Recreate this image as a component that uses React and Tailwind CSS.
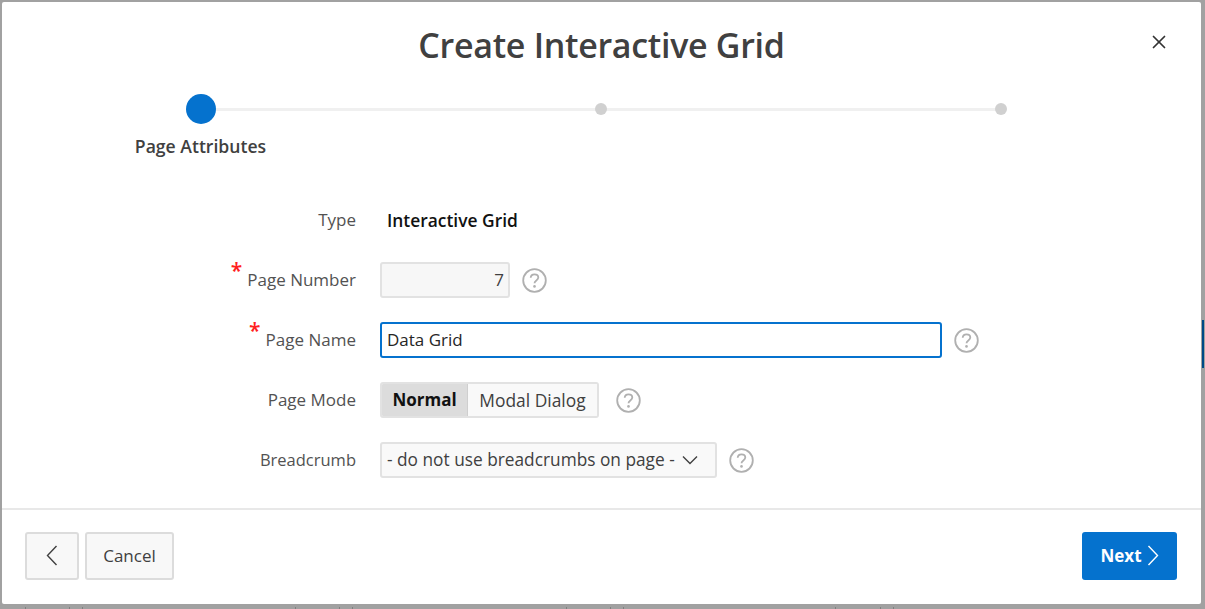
import { X } from "lucide-react";

const backdropTicks = [25, 69, 82, 295, 339, 352, 566, 610, 623, 835, 880, 893];

function Help() {
  return (
    <svg width="25" height="25" viewBox="0 0 25 25" fill="none" className="shrink-0">
      <circle cx="12.5" cy="12.5" r="11.3" stroke="#b0b0b0" strokeWidth="1.8" />
      <path d="M8.7 9.8c.1-2.2 1.7-3.4 3.8-3.4 2.2 0 3.8 1.3 3.8 3.2 0 2.9-3.8 2.9-3.8 5.7" stroke="#b0b0b0" strokeWidth="1.8" />
      <circle cx="12.5" cy="18.4" r="1.3" fill="#b0b0b0" />
    </svg>
  );
}

function Chevron({ dir, color }) {
  return (
    <svg width="12" height="21" viewBox="0 0 12 21" fill="none" className="shrink-0">
      <path d={dir === "left" ? "M10.5 1 1.5 10.5l9 9.5" : "M1.5 1l9 9.5-9 9.5"} stroke={color} strokeWidth="1.4" />
    </svg>
  );
}

function Row({ label, required, labelClass, children }) {
  return (
    <div className="flex h-[60px] items-center">
      <div className={`flex w-[354px] justify-end text-[#525252] ${labelClass || ""}`}>
        {required && <span className="mr-[5px] -mt-[9px] text-[21px] font-semibold leading-[24px] text-[#ff2020]">*</span>}
        <span>{label}</span>
      </div>
      <div className="ml-6 flex items-center">{children}</div>
    </div>
  );
}

export default function App() {
  return (
    <div className="relative flex h-[609px] w-[1205px] overflow-hidden bg-[#a1a1a1] pl-[2px] pt-[2px] font-['Open_Sans','Noto_Sans',sans-serif] text-[17px] text-[#404040]">
      {backdropTicks.map((x) => (
        <div key={x} className="absolute bottom-0 h-[2px] w-[1px] bg-[#808080]" style={{ left: x }} />
      ))}
      <div className="flex h-[602px] w-[1199px] shrink-0 flex-col rounded-[2px] bg-white">
        <div className="relative flex h-[86px] shrink-0 justify-center pt-[20px]">
          <h1 className="text-[34px] font-semibold leading-[46px] tracking-[-0.3px] text-[#404040]">Create Interactive Grid</h1>
          <X className="absolute right-[31px] top-[29px]" size={22} strokeWidth={1.9} color="#333" />
        </div>

        <div className="relative mx-auto mt-[6px] h-[78px] w-[800px] shrink-0 -translate-x-[1px]">
          <div className="absolute left-0 right-0 top-[14px] h-[3px] bg-[#f0f0f0]" />
          <div className="absolute -left-[15px] top-0 size-[30px] rounded-full bg-[#0572ce]" />
          <div className="absolute left-[394px] top-[9px] size-[12px] rounded-full bg-[#d0d0d0]" />
          <div className="absolute left-[794px] top-[9px] size-[12px] rounded-full bg-[#d0d0d0]" />
          <div className="absolute -left-[100px] top-[40px] w-[200px] text-center text-[17.6px] font-semibold leading-[24px]">Page Attributes</div>
        </div>

        <div className="mt-[18px] flex-1">
          <Row label="Type">
            <span className="pl-[7px] text-[17.4px] font-semibold text-[#111]">Interactive Grid</span>
          </Row>
          <Row label="Page Number" required>
            <div className="flex h-[36px] w-[130px] items-center justify-end rounded-[3px] border-2 border-[#e2e2e2] bg-[#f7f7f7] pr-[4px]">7</div>
            <div className="ml-3"><Help /></div>
          </Row>
          <Row label="Page Name" required>
            <div className="flex h-[36px] w-[562px] items-center rounded-[3px] border-2 border-[#0572ce] pl-[5px] text-[#262626]">Data Grid</div>
            <div className="ml-3"><Help /></div>
          </Row>
          <Row label="Page Mode">
            <div className="flex h-[36px] overflow-hidden rounded-[3px] border-2 border-[#e2e2e2]">
              <div className="flex w-[86px] items-center justify-center border-r border-[#cfcfcf] bg-[#dcdcdc] font-bold text-[#111]">Normal</div>
              <div className="flex w-[129px] items-center justify-center bg-[#f9f9f9] text-[17.4px]">Modal Dialog</div>
            </div>
            <div className="ml-[17px]"><Help /></div>
          </Row>
          <Row label="Breadcrumb" labelClass="text-[16.5px]">
            <div className="flex h-[36px] w-[337px] items-center rounded-[3px] border-2 border-[#e2e2e2] bg-[#f9f9f9] pl-[5px] text-[17.3px]">
              <span>- do not use breadcrumbs on page -</span>
              <svg width="16" height="10" viewBox="0 0 16 10" fill="none" className="ml-[7px] shrink-0">
                <path d="M1 1.5l7 7 7-7" stroke="#404040" strokeWidth="1.4" />
              </svg>
            </div>
            <div className="ml-3"><Help /></div>
          </Row>
        </div>

        <div className="flex h-[96px] shrink-0 items-center justify-between border-t-2 border-[#e8e8e8] pb-[3px] pl-[23px] pr-[24px]">
          <div className="flex gap-[6px]">
            <button className="flex h-[48px] w-[54px] items-center justify-center rounded-[3px] border-2 border-[#dcdcdc] bg-[#f8f8f8]">
              <Chevron dir="left" color="#404040" />
            </button>
            <button className="h-[48px] w-[89px] rounded-[3px] border-2 border-[#dcdcdc] bg-[#f8f8f8] pt-[1px]">Cancel</button>
          </div>
          <button className="flex h-[48px] w-[95px] items-center justify-center gap-[5px] rounded-[3px] bg-[#0572ce] font-bold text-white">
            <span className="pt-[1px]">Next</span>
            <Chevron dir="right" color="#ffffff" />
          </button>
        </div>
      </div>
      <div className="ml-[1px] mt-[318px] h-[48px] w-[2px] bg-[#004a86]" />
    </div>
  );
}
